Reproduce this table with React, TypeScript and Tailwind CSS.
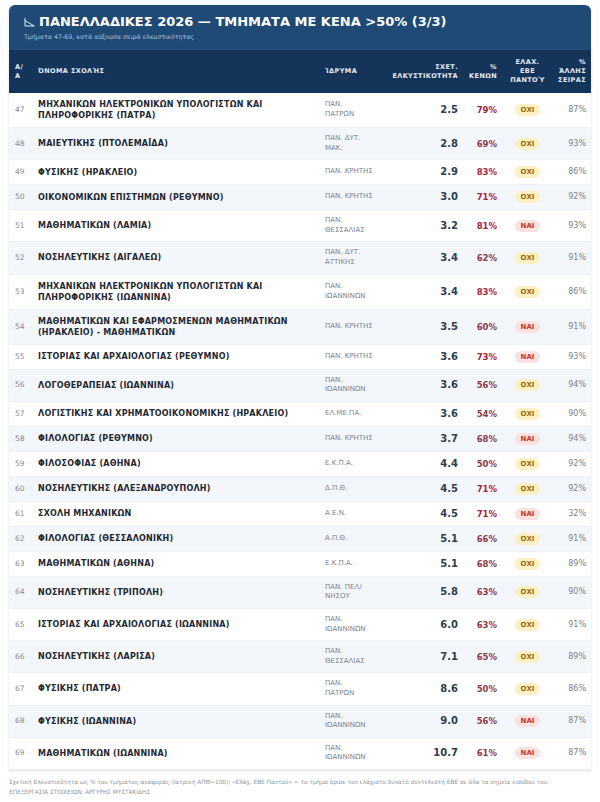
import React from 'react'

type Row = {
  n: number
  name: string[]
  inst: string[]
  score: string
  empty: number
  min: boolean
  other: string
}

const rows: Row[] = [
  { n: 47, name: ['ΜΗΧΑΝΙΚΩΝ ΗΛΕΚΤΡΟΝΙΚΩΝ ΥΠΟΛΟΓΙΣΤΩΝ ΚΑΙ', 'ΠΛΗΡΟΦΟΡΙΚΗΣ (ΠΑΤΡΑ)'], inst: ['ΠΑΝ.', 'ΠΑΤΡΩΝ'], score: '2.5', empty: 79, min: false, other: '87%' },
  { n: 48, name: ['ΜΑΙΕΥΤΙΚΗΣ (ΠΤΟΛΕΜΑΪΔΑ)'], inst: ['ΠΑΝ. ΔΥΤ.', 'ΜΑΚ.'], score: '2.8', empty: 69, min: false, other: '93%' },
  { n: 49, name: ['ΦΥΣΙΚΗΣ (ΗΡΑΚΛΕΙΟ)'], inst: ['ΠΑΝ. ΚΡΗΤΗΣ'], score: '2.9', empty: 83, min: false, other: '86%' },
  { n: 50, name: ['ΟΙΚΟΝΟΜΙΚΩΝ ΕΠΙΣΤΗΜΩΝ (ΡΕΘΥΜΝΟ)'], inst: ['ΠΑΝ. ΚΡΗΤΗΣ'], score: '3.0', empty: 71, min: false, other: '92%' },
  { n: 51, name: ['ΜΑΘΗΜΑΤΙΚΩΝ (ΛΑΜΙΑ)'], inst: ['ΠΑΝ.', 'ΘΕΣΣΑΛΙΑΣ'], score: '3.2', empty: 81, min: true, other: '93%' },
  { n: 52, name: ['ΝΟΣΗΛΕΥΤΙΚΗΣ (ΑΙΓΑΛΕΩ)'], inst: ['ΠΑΝ. ΔΥΤ.', 'ΑΤΤΙΚΗΣ'], score: '3.4', empty: 62, min: false, other: '91%' },
  { n: 53, name: ['ΜΗΧΑΝΙΚΩΝ ΗΛΕΚΤΡΟΝΙΚΩΝ ΥΠΟΛΟΓΙΣΤΩΝ ΚΑΙ', 'ΠΛΗΡΟΦΟΡΙΚΗΣ (ΙΩΑΝΝΙΝΑ)'], inst: ['ΠΑΝ.', 'ΙΩΑΝΝΙΝΩΝ'], score: '3.4', empty: 83, min: false, other: '86%' },
  { n: 54, name: ['ΜΑΘΗΜΑΤΙΚΩΝ ΚΑΙ ΕΦΑΡΜΟΣΜΕΝΩΝ ΜΑΘΗΜΑΤΙΚΩΝ', '(ΗΡΑΚΛΕΙΟ) - ΜΑΘΗΜΑΤΙΚΩΝ'], inst: ['ΠΑΝ. ΚΡΗΤΗΣ'], score: '3.5', empty: 60, min: true, other: '91%' },
  { n: 55, name: ['ΙΣΤΟΡΙΑΣ ΚΑΙ ΑΡΧΑΙΟΛΟΓΙΑΣ (ΡΕΘΥΜΝΟ)'], inst: ['ΠΑΝ. ΚΡΗΤΗΣ'], score: '3.6', empty: 73, min: true, other: '93%' },
  { n: 56, name: ['ΛΟΓΟΘΕΡΑΠΕΙΑΣ (ΙΩΑΝΝΙΝΑ)'], inst: ['ΠΑΝ.', 'ΙΩΑΝΝΙΝΩΝ'], score: '3.6', empty: 56, min: false, other: '94%' },
  { n: 57, name: ['ΛΟΓΙΣΤΙΚΗΣ ΚΑΙ ΧΡΗΜΑΤΟΟΙΚΟΝΟΜΙΚΗΣ (ΗΡΑΚΛΕΙΟ)'], inst: ['ΕΛ.ΜΕ.ΠΑ.'], score: '3.6', empty: 54, min: false, other: '90%' },
  { n: 58, name: ['ΦΙΛΟΛΟΓΙΑΣ (ΡΕΘΥΜΝΟ)'], inst: ['ΠΑΝ. ΚΡΗΤΗΣ'], score: '3.7', empty: 68, min: true, other: '94%' },
  { n: 59, name: ['ΦΙΛΟΣΟΦΙΑΣ (ΑΘΗΝΑ)'], inst: ['Ε.Κ.Π.Α.'], score: '4.4', empty: 50, min: false, other: '92%' },
  { n: 60, name: ['ΝΟΣΗΛΕΥΤΙΚΗΣ (ΑΛΕΞΑΝΔΡΟΥΠΟΛΗ)'], inst: ['Δ.Π.Θ.'], score: '4.5', empty: 71, min: false, other: '92%' },
  { n: 61, name: ['ΣΧΟΛΗ ΜΗΧΑΝΙΚΩΝ'], inst: ['Α.Ε.Ν.'], score: '4.5', empty: 71, min: true, other: '32%' },
  { n: 62, name: ['ΦΙΛΟΛΟΓΙΑΣ (ΘΕΣΣΑΛΟΝΙΚΗ)'], inst: ['Α.Π.Θ.'], score: '5.1', empty: 66, min: false, other: '91%' },
  { n: 63, name: ['ΜΑΘΗΜΑΤΙΚΩΝ (ΑΘΗΝΑ)'], inst: ['Ε.Κ.Π.Α.'], score: '5.1', empty: 68, min: false, other: '89%' },
  { n: 64, name: ['ΝΟΣΗΛΕΥΤΙΚΗΣ (ΤΡΙΠΟΛΗ)'], inst: ['ΠΑΝ. ΠΕΛ/', 'ΝΗΣΟΥ'], score: '5.8', empty: 63, min: false, other: '90%' },
  { n: 65, name: ['ΙΣΤΟΡΙΑΣ ΚΑΙ ΑΡΧΑΙΟΛΟΓΙΑΣ (ΙΩΑΝΝΙΝΑ)'], inst: ['ΠΑΝ.', 'ΙΩΑΝΝΙΝΩΝ'], score: '6.0', empty: 63, min: false, other: '91%' },
  { n: 66, name: ['ΝΟΣΗΛΕΥΤΙΚΗΣ (ΛΑΡΙΣΑ)'], inst: ['ΠΑΝ.', 'ΘΕΣΣΑΛΙΑΣ'], score: '7.1', empty: 65, min: false, other: '89%' },
  { n: 67, name: ['ΦΥΣΙΚΗΣ (ΠΑΤΡΑ)'], inst: ['ΠΑΝ.', 'ΠΑΤΡΩΝ'], score: '8.6', empty: 50, min: false, other: '86%' },
  { n: 68, name: ['ΦΥΣΙΚΗΣ (ΙΩΑΝΝΙΝΑ)'], inst: ['ΠΑΝ.', 'ΙΩΑΝΝΙΝΩΝ'], score: '9.0', empty: 56, min: true, other: '87%' },
  { n: 69, name: ['ΜΑΘΗΜΑΤΙΚΩΝ (ΙΩΑΝΝΙΝΑ)'], inst: ['ΠΑΝ.', 'ΙΩΑΝΝΙΝΩΝ'], score: '10.7', empty: 61, min: true, other: '87%' },
]

function ChartIcon() {
  return (
    <svg width="11" height="10" viewBox="0 0 11 10" fill="none" className="shrink-0">
      <path d="M1 1 V9 H10.3 L1 3.6" stroke="#e6eef7" strokeWidth="1" strokeLinejoin="round" />
    </svg>
  )
}

function Badge({ yes }: { yes: boolean }) {
  return yes ? (
    <span className="inline-block rounded-full bg-[#fde0e0] px-[6px] py-[1px] text-[7px] font-bold leading-[10px] text-[#c0392b]">ΝΑΙ</span>
  ) : (
    <span className="inline-block rounded-full bg-[#fdf0c4] px-[6px] py-[1px] text-[7px] font-bold leading-[10px] text-[#9a6b0a]">ΟΧΙ</span>
  )
}

export default function App() {
  return (
    <div className="min-h-[802px] bg-white pt-[5px] font-['DejaVu_Sans',sans-serif]">
      <div className="mx-[9px] overflow-hidden rounded-t-[6px] bg-white shadow-[0_1px_3px_rgba(0,0,0,0.12)]">
        <div className="bg-[#1f4a76] px-[15px] pb-[9px] pt-[9px]">
          <div className="flex items-center gap-[4px]">
            <ChartIcon />
            <h1 className="text-[13px] font-bold leading-[16px] text-white">ΠΑΝΕΛΛΑΔΙΚΕΣ 2026 — ΤΜΗΜΑΤΑ ΜΕ ΚΕΝΑ &gt;50% (3/3)</h1>
          </div>
          <p className="mt-[2px] text-[6.3px] leading-[9px] text-[#a9c1da]">Τμήματα 47-69, κατά αύξουσα σειρά ελκυστικότητας</p>
        </div>
        <table className="w-full table-fixed border-collapse">
          <colgroup>
            <col className="w-[23px]" />
            <col className="w-[289px]" />
            <col className="w-[70px]" />
            <col className="w-[72px]" />
            <col className="w-[39px]" />
            <col className="w-[51px]" />
            <col />
          </colgroup>
          <thead>
            <tr className="h-[43px] bg-[#15345a] text-[6.5px] font-bold leading-[9px] tracking-[0.4px] text-[#e3ebf4]">
              <th className="pl-[6px] text-left">Α/<br />Α</th>
              <th className="pl-[6px] text-left">ΌΝΟΜΑ ΣΧΟΛΉΣ</th>
              <th className="pl-[4px] text-left">ΊΔΡΥΜΑ</th>
              <th className="pr-[5px] text-right">ΣΧΕΤ.<br />ΕΛΚΥΣΤΙΚΟΤΗΤΑ</th>
              <th className="pr-[5px] text-right">%<br />ΚΕΝΩΝ</th>
              <th className="text-center">ΕΛΑΧ.<br />ΕΒΕ<br />ΠΑΝΤΟΎ</th>
              <th className="pr-[5px] text-right">%<br />ΆΛΛΗΣ<br />ΣΕΙΡΑΣ</th>
            </tr>
          </thead>
          <tbody className="text-[8px] leading-[10px]">
            {rows.map((r, i) => (
              <tr key={r.n} className={`border-b border-[#eef1f5] ${i % 2 === 0 ? 'bg-white' : 'bg-[#f3f6fa]'}`}>
                <td className="py-[6px] pl-[6px] text-[7.5px] leading-[10px] text-[#848a93]">{r.n}</td>
                <td className="py-[6px] pl-[6px] text-[8px] font-bold leading-[11px] tracking-[0.2px] text-[#1f2933]">
                  {r.name.map((l) => (
                    <div key={l} className="whitespace-nowrap">{l}</div>
                  ))}
                </td>
                <td className="py-[6px] pl-[4px] text-[7px] leading-[9.6px] text-[#7b828c]">
                  {r.inst.map((l) => (
                    <div key={l} className="whitespace-nowrap">{l}</div>
                  ))}
                </td>
                <td className="py-[6px] pr-[5px] text-right text-[10px] font-bold leading-[12px] text-[#2c3e50]">{r.score}</td>
                <td className={`py-[6px] pr-[5px] text-right text-[8.5px] font-bold leading-[10px] ${r.empty >= 70 ? 'text-[#a8233a]' : 'text-[#8a3a4e]'}`}>{r.empty}%</td>
                <td className="py-[6px] text-center leading-[10px]">
                  <Badge yes={r.min} />
                </td>
                <td className="py-[6px] pr-[5px] text-right text-[8px] leading-[10px] text-[#7b828c]">{r.other}</td>
              </tr>
            ))}
          </tbody>
        </table>
      </div>
      <div className="mx-[9px] mt-[7px] text-[5.8px] leading-[10px] text-[#8e96a0]">
        <p>Σχετική Ελκυστικότητα ως % του τμήματος-αναφοράς (Ιατρική ΑΠΘ=100). «Ελάχ. ΕΒΕ Παντού» = το τμήμα όρισε τον ελάχιστο δυνατό συντελεστή ΕΒΕ σε όλα τα σημεία εισόδου του.</p>
        <p>ΕΠΕΞΕΡΓΑΣΙΑ ΣΤΟΙΧΕΙΩΝ: ΑΡΓΥΡΗΣ ΜΥΣΤΑΚΙΔΗΣ</p>
      </div>
    </div>
  )
}
